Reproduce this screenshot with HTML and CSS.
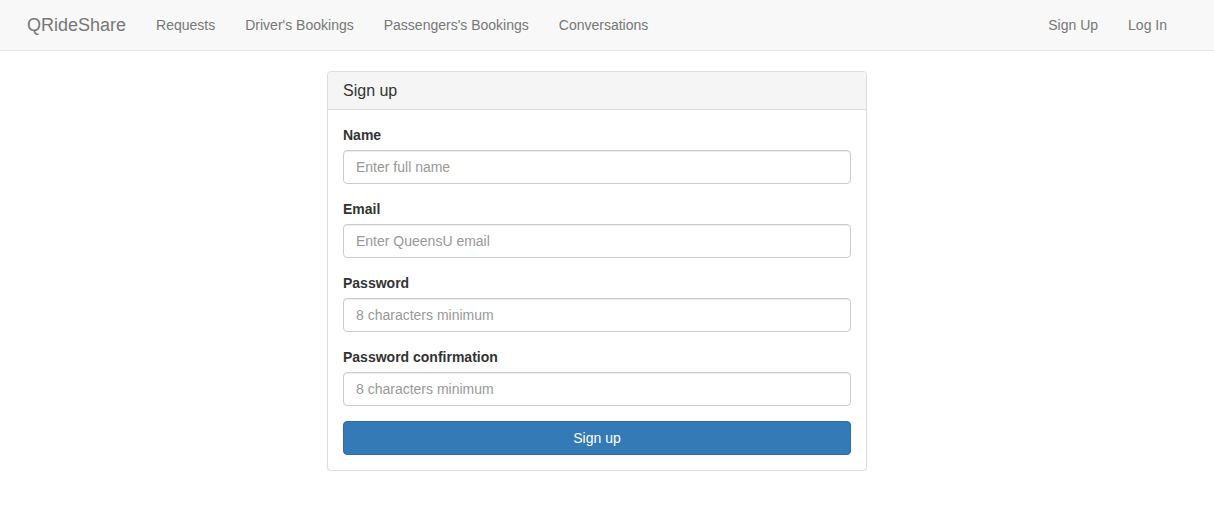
FILE: index.html
```html
<!DOCTYPE html>
<html>
<head>
<meta charset="utf-8">
<title>QRideShare</title>
<link rel="stylesheet" href="styles.css">
</head>
<body>
<nav class="navbar">
  <div class="nav-inner">
    <div class="nav-left">
      <a class="brand" href="#">QRideShare</a>
      <a class="nav-link" href="#">Requests</a>
      <a class="nav-link" href="#">Driver's Bookings</a>
      <a class="nav-link" href="#">Passengers's Bookings</a>
      <a class="nav-link" href="#">Conversations</a>
    </div>
    <div class="nav-right">
      <a class="nav-link" href="#">Sign Up</a>
      <a class="nav-link" href="#">Log In</a>
    </div>
  </div>
</nav>
<main class="main">
  <section class="panel">
    <div class="panel-heading">Sign up</div>
    <form class="panel-body">
      <div class="form-group">
        <label class="label">Name</label>
        <input class="input" type="text" placeholder="Enter full name">
      </div>
      <div class="form-group">
        <label class="label">Email</label>
        <input class="input" type="text" placeholder="Enter QueensU email">
      </div>
      <div class="form-group">
        <label class="label">Password</label>
        <input class="input" type="password" placeholder="8 characters minimum">
      </div>
      <div class="form-group">
        <label class="label">Password confirmation</label>
        <input class="input" type="password" placeholder="8 characters minimum">
      </div>
      <button class="btn" type="button">Sign up</button>
    </form>
  </section>
</main>
</body>
</html>
```

FILE: styles.css
```css
* { box-sizing: border-box; }
html, body { margin: 0; padding: 0; background: #fff; }
body {
  font-family: "Liberation Sans", Arial, Helvetica, sans-serif;
  font-size: 14px;
  line-height: 20px;
  color: #333;
}
a { text-decoration: none; }

.navbar {
  background: #f8f8f8;
  border-bottom: 1px solid #e7e7e7;
  height: 51px;
  display: flex;
  justify-content: center;
  padding-right: 20px;
}
.nav-inner {
  width: 1170px;
  display: flex;
  justify-content: space-between;
}
.nav-left, .nav-right { display: flex; }
.brand {
  font-size: 18px;
  line-height: 20px;
  padding: 15px;
  color: #777;
  height: 50px;
}
.nav-link {
  font-size: 14px;
  line-height: 20px;
  padding: 15px;
  color: #777;
}

.main {
  display: flex;
  justify-content: center;
  padding-right: 20px;
  padding-top: 20px;
}
.panel {
  width: 540px;
  border: 1px solid #ddd;
  border-radius: 4px;
  background: #fff;
  box-shadow: 0 1px 1px rgba(0,0,0,0.05);
}
.panel-heading {
  background: #f5f5f5;
  border-bottom: 1px solid #ddd;
  border-radius: 3px 3px 0 0;
  padding: 10px 15px;
  font-size: 16px;
  line-height: 17px;
  height: 38px;
  color: #333;
}
.panel-body {
  padding: 15px;
  margin: 0;
  display: flex;
  flex-direction: column;
}
.form-group {
  display: flex;
  flex-direction: column;
  margin-bottom: 15px;
}
.label {
  font-weight: bold;
  margin-bottom: 5px;
  line-height: 20px;
}
.input {
  height: 34px;
  padding: 6px 12px;
  font-family: inherit;
  font-size: 14px;
  line-height: 20px;
  color: #555;
  border: 1px solid #ccc;
  border-radius: 4px;
  box-shadow: inset 0 1px 1px rgba(0,0,0,0.075);
  background: #fff;
}
.input::placeholder { color: #999; }
.btn {
  height: 34px;
  padding: 6px 12px;
  font-family: inherit;
  font-size: 14px;
  line-height: 20px;
  color: #fff;
  background: #337ab7;
  border: 1px solid #2e6da4;
  border-radius: 4px;
  width: 100%;
}
```
